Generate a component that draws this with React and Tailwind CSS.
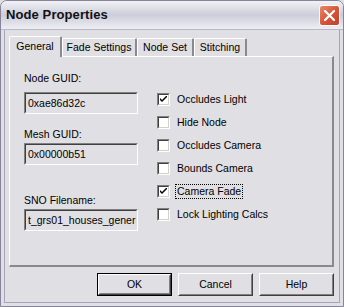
import { useState } from 'react';

const TABS = [
  { label: 'General', w: 'w-[53px]' },
  { label: 'Fade Settings', w: 'w-[75px]' },
  { label: 'Node Set', w: 'w-[57px]' },
  { label: 'Stitching', w: 'w-[53px]' },
];

const FIELDS = [
  { label: 'Node GUID:', value: '0xae86d32c', labelMt: 'mt-[15px]', boxMt: 'mt-[7px]' },
  { label: 'Mesh GUID:', value: '0x00000b51', labelMt: 'mt-[14px]', boxMt: 'mt-[2px]' },
  { label: 'SNO Filename:', value: 't_grs01_houses_generic', labelMt: 'mt-[29px]', boxMt: 'mt-[2px]' },
];

const FLAGS = [
  { label: 'Occludes Light', checked: true },
  { label: 'Hide Node', checked: false },
  { label: 'Occludes Camera', checked: false },
  { label: 'Bounds Camera', checked: false },
  { label: 'Camera Fade', checked: true, focus: true },
  { label: 'Lock Lighting Calcs', checked: false },
];

function Checkbox({ checked }) {
  return (
    <div className="w-[13px] h-[13px] border border-t-[#808080] border-l-[#808080] border-r-white border-b-white shrink-0">
      <div className="w-full h-full bg-white border border-t-[#404040] border-l-[#404040] border-r-[#d4d0c8] border-b-[#d4d0c8] flex items-center justify-center">
        {checked && (
          <svg width="7" height="7" viewBox="0 0 7 7">
            <path d="M0 2 L0 4 L2 6 L7 1 L7 -1 L2 4 Z" fill="#000" />
          </svg>
        )}
      </div>
    </div>
  );
}

function Button({ children, def }) {
  return (
    <button className={`w-[75px] h-[23px] ${def ? 'border border-black' : ''} bg-[#e0dfe3]`}>
      <div className="w-full h-full border border-t-white border-l-white border-r-[#404040] border-b-[#404040]">
        <div className="w-full h-full border border-t-[#e0dfe3] border-l-[#e0dfe3] border-r-[#808080] border-b-[#808080] flex items-center justify-center text-[10.5px] text-black">
          {children}
        </div>
      </div>
    </button>
  );
}

export default function App() {
  const [tab, setTab] = useState('General');
  const [flags, setFlags] = useState(FLAGS);

  const toggle = (label) =>
    setFlags(prev => prev.map(f => f.label === label ? { ...f, checked: !f.checked } : f));

  return (
    <div className="w-[344px] h-[307px] bg-[#e0dfe3] font-['Liberation_Sans',Arial,sans-serif] text-black overflow-hidden">
      <div className="w-full h-full flex flex-col border border-[#85849a] rounded-t-[7px] overflow-hidden">
        {/* Title bar */}
        <div className="h-[29px] shrink-0 flex items-center justify-between pl-[5px] pr-[3px] bg-gradient-to-b from-[#f2f2f6] via-[#cdcdda] to-[#eeeef3] border-b border-[#b9b8c8]">
          <span className="text-[13px] font-bold text-[#111] tracking-[0.1px]">Node Properties</span>
          <div className="w-[21px] h-[21px] rounded-[3px] border border-white bg-gradient-to-br from-[#e8876c] via-[#d8573a] to-[#c0402a] flex items-center justify-center">
            <svg width="11" height="11" viewBox="0 0 11 11">
              <path d="M1 1 L10 10 M10 1 L1 10" stroke="#fff" strokeWidth="2.2" strokeLinecap="square" />
            </svg>
          </div>
        </div>

        {/* Body */}
        <div className="flex-1 flex flex-col border-x-[3px] border-b-[3px] border-[#e0dfe3]">
          <div className="flex-1 flex flex-col border-x border-b border-[#a7a6b8] pl-[4px] pr-[5px] pt-[6px]">
            {/* Tabs */}
            <div className="flex items-end h-[20px] relative z-10">
              {TABS.map(t => (
                <button
                  key={t.label}
                  onClick={() => setTab(t.label)}
                  className={`${t.w} ${tab === t.label ? 'h-[21px] mb-[-1px] bg-[#e0dfe3]' : 'h-[18px]'} text-[10.5px] border-l border-t border-l-white border-t-white border-r-2 border-r-[#8a8991] rounded-t-[2px] flex items-center justify-center`}
                >
                  {t.label}
                </button>
              ))}
            </div>

            {/* Panel */}
            <div className="h-[211px] shrink-0 border-l border-t border-l-white border-t-white border-r-2 border-b-2 border-r-[#8a8991] border-b-[#8a8991] flex">
              <div className="w-[132px] pl-[14px] flex flex-col">
                {FIELDS.map(f => (
                  <div key={f.label} className="flex flex-col">
                    <div className={`${f.labelMt} h-[13px] leading-[13px] text-[10.5px]`}>{f.label}</div>
                    <div className={`${f.boxMt} w-[114px] h-[22px] border border-t-[#808080] border-l-[#808080] border-r-white border-b-white`}>
                      <div className="w-full h-full border border-t-[#404040] border-l-[#404040] border-r-[#e0dfe3] border-b-[#e0dfe3] overflow-hidden whitespace-nowrap text-[10.5px] leading-[18px] pl-[2px]">
                        {f.value}
                      </div>
                    </div>
                  </div>
                ))}
              </div>
              <div className="flex flex-col pt-[36px] pl-[15px]">
                {flags.map(f => (
                  <div key={f.label} className="h-[23px] flex items-start gap-[6px] cursor-default" onClick={() => toggle(f.label)}>
                    <Checkbox checked={f.checked} />
                    <span className={`text-[10.5px] leading-[13px] px-[1px] ${f.focus ? 'outline outline-1 outline-dotted outline-black' : ''}`}>
                      {f.label}
                    </span>
                  </div>
                ))}
              </div>
            </div>

            {/* Buttons */}
            <div className="flex justify-end gap-[6px] mt-[6px]">
              <Button def>OK</Button>
              <Button>Cancel</Button>
              <Button>Help</Button>
            </div>
          </div>
        </div>
      </div>
    </div>
  );
}
